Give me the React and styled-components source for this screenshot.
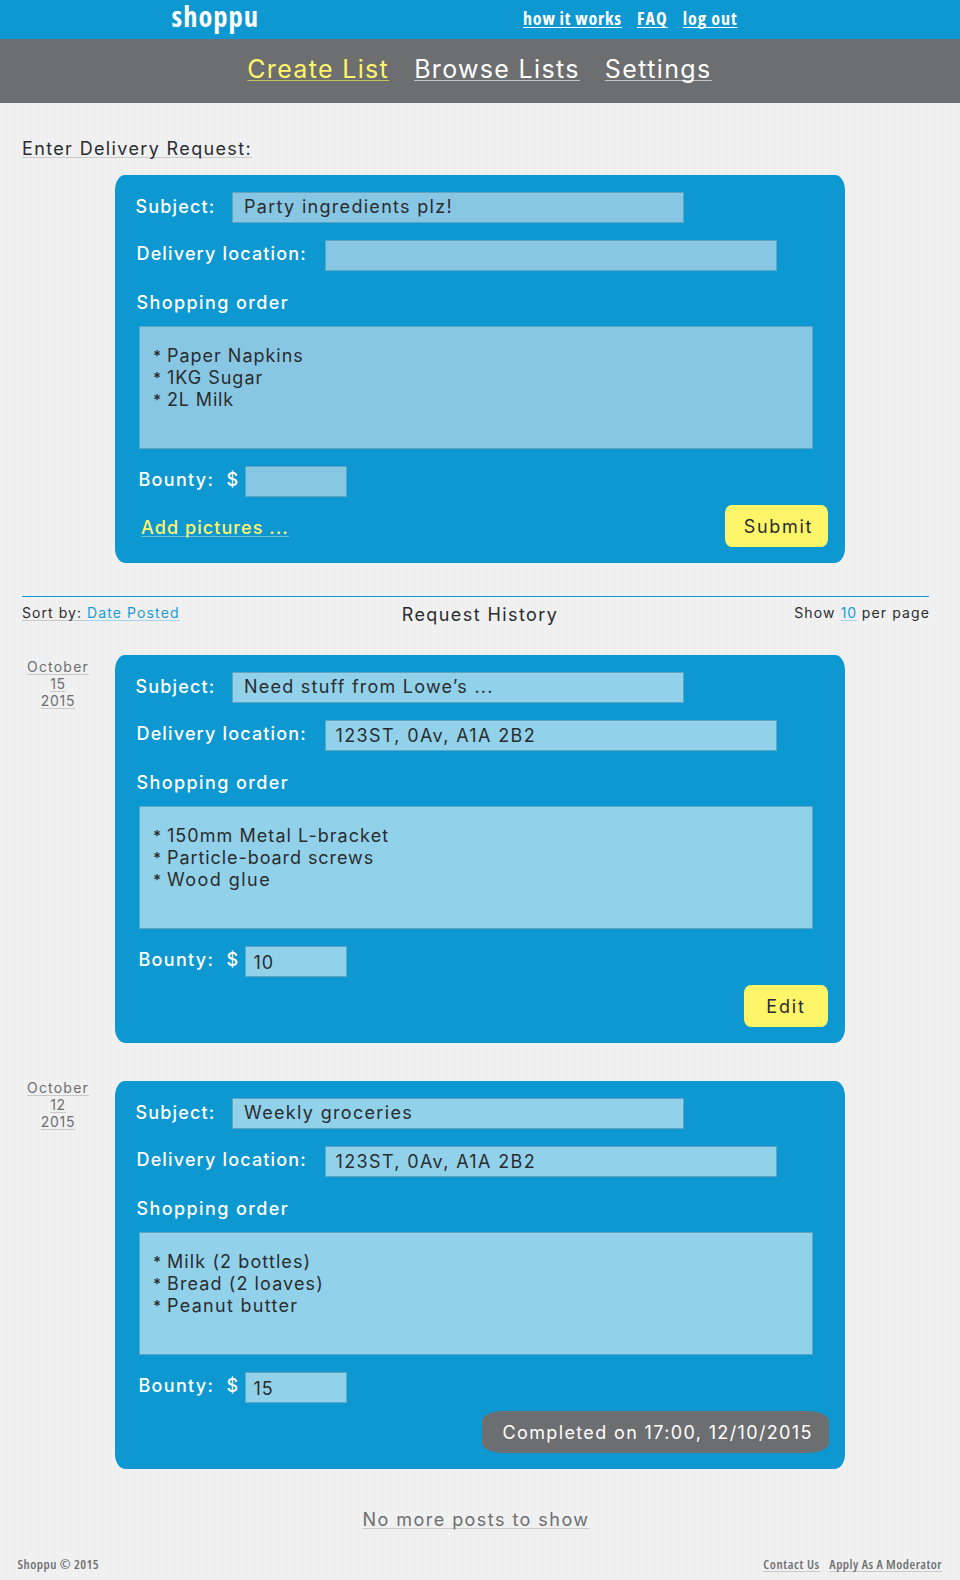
import React from "react";
import styled, { createGlobalStyle, css } from "styled-components";

const blue = "#0d98d1";
const grey = "#6d6e70";
const yellow = "#fff568";
const ink = "#2a2c2f";

const GlobalStyle = createGlobalStyle`
  *, *::before, *::after { box-sizing: border-box; }
  body {
    margin: 0;
    color: ${ink};
    font: 400 18px/20px Inter, "Liberation Sans", sans-serif;
    background: repeating-linear-gradient(90deg, #f1f1f1 0 2px, #efefef 2px 4px);
  }
`;

const Page = styled.div`
  width: 960px;
  height: 1580px;
`;

const Text = styled.span`
  letter-spacing: ${(p) => p.$ls ?? 1.36}px;
  white-space: pre;
`;

const underline = css`
  text-decoration: underline 1px ${(p) => p.$line || "#c9c9ca"};
  text-underline-offset: ${(p) => p.$offset ?? 1.5}px;
  text-decoration-skip-ink: none;
`;

const Underlined = styled(Text)`
  ${underline}
`;

const Link = styled.a`
  color: inherit;
  letter-spacing: ${(p) => p.$ls ?? 1.36}px;
  white-space: pre;
  cursor: pointer;
  ${underline}
`;

const condensed = css`
  font-family: "Open Sans", "Liberation Sans", sans-serif;
  font-stretch: 75%;
`;

const TopBar = styled.header`
  ${condensed}
  display: flex;
  height: 39px;
  padding-left: 171.5px;
  background: ${blue};
  color: #fff;
  font-weight: 700;
`;

const Brand = styled.div`
  width: 351.5px;
  font-size: 28.5px;
  line-height: 32px;
  letter-spacing: 1px;
`;

const TopLinks = styled.nav`
  display: flex;
  gap: 15px;
  font-size: 18px;
  line-height: 36px;
`;

const MainNav = styled.nav`
  display: flex;
  justify-content: center;
  gap: 25px;
  height: 64px;
  padding-right: 1px;
  background: ${grey};
  color: #fff;
  font-size: 25px;
  line-height: 60px;
`;

const NavLink = styled(Link)`
  color: ${(p) => (p.$active ? yellow : "#fff")};
`;

const Heading = styled.h1`
  margin: 36px 0 16px 22px;
  height: 20px;
  font: inherit;
`;

const Card = styled.section`
  display: flex;
  flex-direction: column;
  width: 730px;
  height: 388px;
  padding-top: 17px;
  border-radius: 10px / 15px;
  background: ${blue};
`;

const NewRequest = styled.div`
  padding-left: 115px;
`;

const Row = styled.div`
  display: flex;
  height: 31px;
  margin-bottom: 17px;
  padding-left: ${(p) => p.$left}px;
`;

const Label = styled(Text)`
  flex: none;
  width: ${(p) => p.$w}px;
  line-height: ${(p) => p.$lh || 29}px;
  color: #fff;
  font-weight: 500;
`;

const fieldBox = css`
  border: 1px solid #5ea5c4;
  background: ${(p) => (p.$saved ? "#92d1ea" : "#88c7e3")};
`;

const Field = styled.div`
  ${fieldBox}
  width: ${(p) => p.$w}px;
  height: 31px;
  padding-left: ${(p) => p.$pad}px;
  line-height: ${(p) => p.$lh || 29}px;
`;

const OrderLabel = styled(Text)`
  margin: 5px 0 13px 21.5px;
  height: 20px;
  color: #fff;
  font-weight: 500;
`;

const Order = styled.ul`
  ${fieldBox}
  list-style: none;
  width: 674px;
  height: 123px;
  margin: 0 0 17px 24px;
  padding: 18px 0 0 13px;
  line-height: 21.8px;
`;

const OrderLine = styled.li`
  display: flex;
`;

const Star = styled.span`
  width: 14px;
  font-size: 15px;
  font-weight: 600;
`;

const Actions = styled.div`
  display: flex;
  justify-content: space-between;
  margin: -9px ${(p) => p.$right ?? 17}px 0 26px;
`;

const AddPictures = styled(Link)`
  color: ${yellow};
  font-weight: 500;
  line-height: 45px;
`;

const Button = styled.button`
  width: ${(p) => p.$w}px;
  height: 42px;
  margin: 0 0 0 auto;
  padding: 2px 0 0 ${(p) => p.$pad || 0}px;
  border: 0;
  border-radius: 7px / 8px;
  background: ${yellow};
  color: ${ink};
  font: inherit;
  line-height: 40px;
`;

const Completed = styled.div`
  width: 347px;
  height: 42px;
  margin-left: auto;
  padding-left: 20.5px;
  border-radius: 22px / 10px;
  background: ${grey};
  color: #fff;
  line-height: 43px;
`;

const HistoryBar = styled.div`
  display: grid;
  grid-template-columns: 1fr auto 1fr;
  width: 907px;
  height: 59px;
  margin: 33px 0 0 22px;
  border-top: 1px solid ${blue};
  font-size: 14px;
  line-height: 32px;
`;

const HistoryTitle = styled.h2`
  margin: 0 0 0 9px;
  font: inherit;
  font-size: 18px;
  line-height: 35px;
`;

const PerPage = styled.div`
  text-align: right;
  margin-right: -1px;
`;

const Accent = styled(Link)`
  color: #1a9cd4;
`;

const Entry = styled.article`
  display: flex;
  margin-bottom: 38px;
`;

const PostedDate = styled.time`
  display: flex;
  flex-direction: column;
  align-items: center;
  width: 115px;
  margin-top: ${(p) => p.$top}px;
  padding-left: 1px;
  color: ${grey};
  font-size: 14px;
  line-height: 16.9px;
`;

const EndNote = styled.div`
  padding: 3px 8px 0 0;
  text-align: center;
  color: ${grey};
`;

const Footer = styled.footer`
  ${condensed}
  display: flex;
  gap: 9.5px;
  margin-top: 24px;
  padding: 0 18px 0 17.5px;
  color: ${grey};
  font-size: 13px;
  font-weight: 600;
`;

const Copyright = styled(Text)`
  margin-right: auto;
`;

function RequestCard({ saved, subject, location, items, bounty, children, right }) {
  return (
    <Card>
      <Row $left={20.5}>
        <Label $w={96.5} $ls={1.15}>Subject:</Label>
        <Field $saved={saved} $w={452} $pad={11} $lh={27}>
          <Text $ls={subject.ls}>{subject.text}</Text>
        </Field>
      </Row>
      <Row $left={21.5}>
        <Label $w={188.5} $lh={27} $ls={1.15}>Delivery location:</Label>
        <Field $saved={saved} $w={452} $pad={9.5}>
          <Text $ls={1.36}>{location}</Text>
        </Field>
      </Row>
      <OrderLabel $ls={1.4}>Shopping order</OrderLabel>
      <Order $saved={saved}>
        {items.map(([text, ls]) => (
          <OrderLine key={text}>
            <Star>*</Star>
            <Text $ls={ls}>{text}</Text>
          </OrderLine>
        ))}
      </Order>
      <Row $left={23.5}>
        <Label $w={88} $lh={28} $ls={1.3}>Bounty:</Label>
        <Label $w={18.5} $lh={28}>$</Label>
        <Field $saved={saved} $w={102} $pad={7.5} $lh={32}>
          <Text $ls={0.9}>{bounty}</Text>
        </Field>
      </Row>
      <Actions $right={right}>{children}</Actions>
    </Card>
  );
}

function DateStack({ top, month, day, year }) {
  return (
    <PostedDate $top={top}>
      <Underlined $ls={1.2}>{month}</Underlined>
      <Underlined $ls={0.7}>{day}</Underlined>
      <Underlined $ls={0.7}>{year}</Underlined>
    </PostedDate>
  );
}

export default function App() {
  return (
    <Page>
      <GlobalStyle />
      <TopBar>
        <Brand>shoppu</Brand>
        <TopLinks>
          <Link $ls={0.8} $line="#fff">how it works</Link>
          <Link $ls={1.1} $line="#fff">FAQ</Link>
          <Link $ls={0.95} $line="#fff">log out</Link>
        </TopLinks>
      </TopBar>
      <MainNav>
        <NavLink $active $line="#c6c061" $ls={1.33}>Create List</NavLink>
        <NavLink $line="#c4c5c6" $ls={1.33}>Browse Lists</NavLink>
        <NavLink $ls={1.4} $line="#c4c5c6">Settings</NavLink>
      </MainNav>

      <Heading>
        <Underlined>Enter Delivery Request:</Underlined>
      </Heading>
      <NewRequest>
        <RequestCard
          subject={{ text: "Party ingredients plz!", ls: 1.3 }}
          location=""
          items={[["Paper Napkins", 0.98], ["1KG Sugar", 0.98], ["2L Milk", 0.85]]}
          bounty=""
        >
          <AddPictures $ls={1.07} $line="#6fbfcb">Add pictures ...</AddPictures>
          <Button $w={103} $pad={4}><Text $ls={1.7}>Submit</Text></Button>
        </RequestCard>
      </NewRequest>

      <HistoryBar>
        <div>
          <Underlined $ls={1.05}>Sort by: </Underlined>
          <Accent $ls={1.12} $line="#a5d5eb">Date Posted</Accent>
        </div>
        <HistoryTitle><Text $ls={1.42}>Request History</Text></HistoryTitle>
        <PerPage>
          <Text $ls={1.15}>Show </Text>
          <Accent $ls={0.7} $line="#a5d5eb">10</Accent>
          <Text $ls={1.12}> per page</Text>
        </PerPage>
      </HistoryBar>

      <Entry>
        <DateStack top={4} month="October" day="15" year="2015" />
        <RequestCard
          saved
          subject={{ text: "Need stuff from Lowe’s ...", ls: 1.23 }}
          location="123ST, 0Av, A1A 2B2"
          items={[["150mm Metal L-bracket", 1.05], ["Particle-board screws", 0.93], ["Wood glue", 1.45]]}
          bounty="10"
        >
          <Button $w={84}><Text $ls={1.8}>Edit</Text></Button>
        </RequestCard>
      </Entry>
      <Entry>
        <DateStack top={-1} month="October" day="12" year="2015" />
        <RequestCard
          saved
          subject={{ text: "Weekly groceries", ls: 1.33 }}
          location="123ST, 0Av, A1A 2B2"
          items={[["Milk (2 bottles)", 1.1], ["Bread (2 loaves)", 1.1], ["Peanut butter", 1.3]]}
          bounty="15"
          right={16}
        >
          <Completed><Text $ls={1.36}>Completed on 17:00, 12/10/2015</Text></Completed>
        </RequestCard>
      </Entry>

      <EndNote>
        <Underlined $ls={1.45}>No more posts to show</Underlined>
      </EndNote>
      <Footer>
        <Copyright $ls={0.5}>Shoppu © 2015</Copyright>
        <Link $ls={0.65}>Contact Us</Link>
        <Link $ls={0.5}>Apply As A Moderator</Link>
      </Footer>
    </Page>
  );
}
